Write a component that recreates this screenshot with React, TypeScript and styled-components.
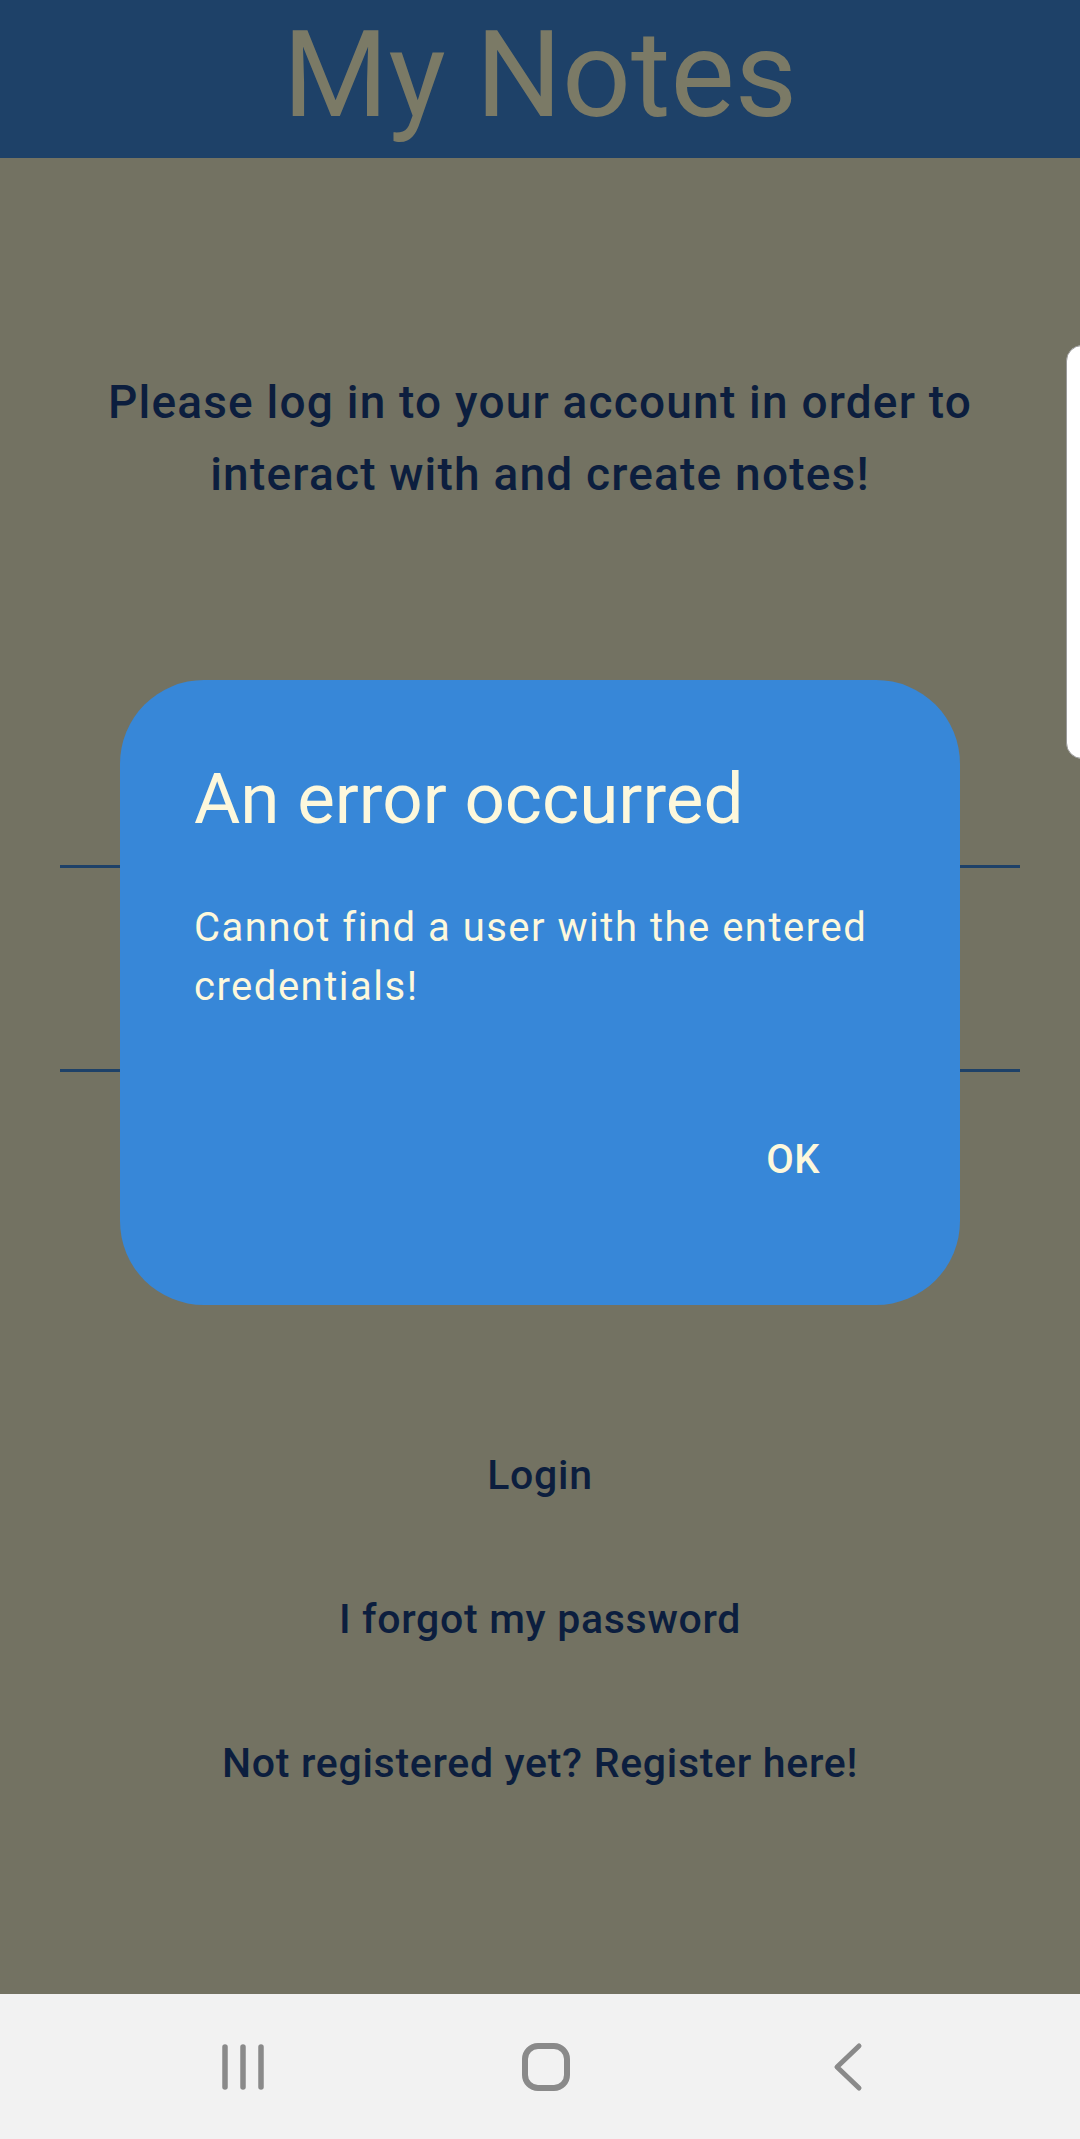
import React from "react";
import styled, { createGlobalStyle } from "styled-components";

const GlobalStyle = createGlobalStyle`
  html, body {
    margin: 0;
    padding: 0;
    background: #737262;
  }
  body {
    font-family: Roboto, "Noto Sans", "Liberation Sans", sans-serif;
  }
`;

const Screen = styled.div`
  position: relative;
  width: 1080px;
  height: 2139px;
  display: flex;
  flex-direction: column;
  background: #737262;
  overflow: hidden;
`;

const AppBar = styled.header`
  height: 158px;
  flex-shrink: 0;
  background: #1e4168;
  display: flex;
  justify-content: center;
  align-items: flex-start;
`;

const AppTitle = styled.h1`
  margin: 0;
  font-size: 121px;
  font-weight: 400;
  line-height: 150px;
  color: #7b7a66;
`;

const Body = styled.main`
  flex: 1;
  display: flex;
  flex-direction: column;
  align-items: center;
  padding-top: 208px;
`;

const Intro = styled.p`
  margin: 0;
  width: 960px;
  text-align: center;
  font-size: 46px;
  font-weight: 500;
  letter-spacing: 1.2px;
  line-height: 72px;
  color: #0c1e3e;
`;

const Fields = styled.div`
  align-self: stretch;
  margin: 257px 60px 0;
  display: flex;
  flex-direction: column;
  gap: 103px;
`;

const Field = styled.div`
  height: 98px;
  border-bottom: 3px solid #1e4168;
`;

const Actions = styled.div`
  margin-top: 379px;
  display: flex;
  flex-direction: column;
  align-items: center;
  gap: 96px;
`;

const LinkButton = styled.span`
  font-size: 41px;
  font-weight: 500;
  letter-spacing: 0.7px;
  line-height: 48px;
  color: #0c1e3e;
`;

const NavBar = styled.nav`
  height: 145px;
  flex-shrink: 0;
  background: #f2f2f2;
  display: grid;
  grid-template-columns: repeat(3, 302px);
  justify-content: center;
  align-items: center;
  justify-items: center;
  padding-left: 12px;
`;

const ScrollHandle = styled.div`
  position: absolute;
  top: 345px;
  left: 1066px;
  width: 30px;
  height: 412px;
  background: #ffffff;
  border: 1px solid #9a9a9a;
  border-radius: 16px;
`;

const Dialog = styled.div`
  position: absolute;
  top: 680px;
  left: 120px;
  width: 840px;
  height: 625px;
  box-sizing: border-box;
  padding: 76px 74px 0;
  background: #3787d8;
  border-radius: 84px;
  color: #fdf8dc;
  display: flex;
  flex-direction: column;
`;

const DialogTitle = styled.h2`
  margin: 0;
  font-size: 71px;
  font-weight: 400;
  line-height: 85px;
`;

const DialogText = styled.p`
  margin: 57px 0 0;
  font-size: 40px;
  font-weight: 400;
  letter-spacing: 1.5px;
  line-height: 59px;
`;

const DialogActions = styled.div`
  margin-top: 120px;
  display: flex;
  justify-content: flex-end;
  padding-right: 66px;
`;

const OkButton = styled.span`
  font-size: 40px;
  font-weight: 500;
  letter-spacing: 0.5px;
  line-height: 48px;
`;

const NavIcon = ({ kind }: { kind: "recent" | "home" | "back" }) => {
  const stroke = "#8a8a8a";
  if (kind === "recent") {
    return (
      <svg width="48" height="48" viewBox="0 0 48 48">
        <g stroke={stroke} strokeWidth="5.5" strokeLinecap="round">
          <line x1="5" y1="4" x2="5" y2="44" />
          <line x1="23" y1="4" x2="23" y2="44" />
          <line x1="41" y1="4" x2="41" y2="44" />
        </g>
      </svg>
    );
  }
  if (kind === "home") {
    return (
      <svg width="50" height="50" viewBox="0 0 50 50">
        <rect x="4" y="4" width="42" height="42" rx="13" fill="none" stroke={stroke} strokeWidth="6" />
      </svg>
    );
  }
  return (
    <svg width="34" height="50" viewBox="0 0 34 50">
      <polyline
        points="28,4 6,25 28,46"
        fill="none"
        stroke={stroke}
        strokeWidth="5"
        strokeLinecap="round"
        strokeLinejoin="round"
      />
    </svg>
  );
};

export default function App() {
  return (
    <>
      <GlobalStyle />
      <Screen>
        <AppBar>
          <AppTitle>My Notes</AppTitle>
        </AppBar>

        <Body>
          <Intro>
            Please log in to your account in order to interact with and create notes!
          </Intro>

          {/* email + password inputs */}
          <Fields>
            <Field />
            <Field />
          </Fields>

          <Actions>
            <LinkButton>Login</LinkButton>
            <LinkButton>I forgot my password</LinkButton>
            <LinkButton>Not registered yet? Register here!</LinkButton>
          </Actions>
        </Body>

        <NavBar>
          <NavIcon kind="recent" />
          <NavIcon kind="home" />
          <NavIcon kind="back" />
        </NavBar>

        <ScrollHandle />

        <Dialog>
          <DialogTitle>An error occurred</DialogTitle>
          <DialogText>Cannot find a user with the entered credentials!</DialogText>
          <DialogActions>
            <OkButton>OK</OkButton>
          </DialogActions>
        </Dialog>
      </Screen>
    </>
  );
}
